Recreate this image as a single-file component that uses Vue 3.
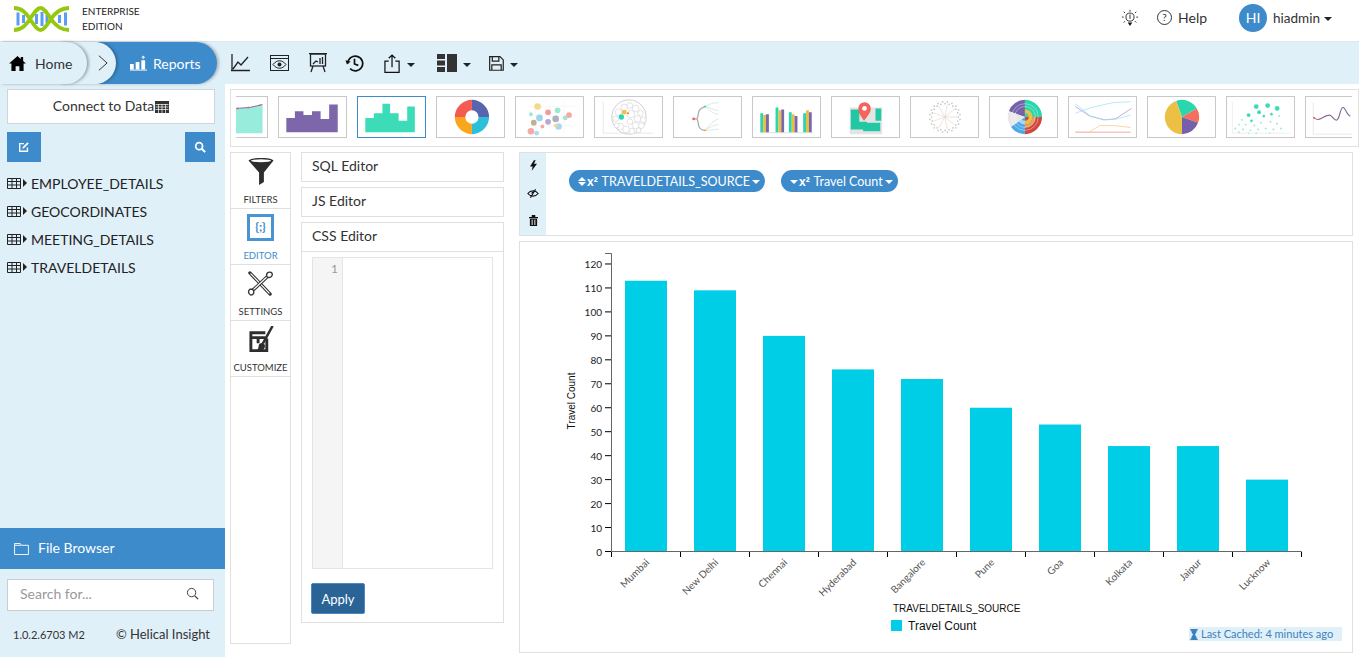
<script setup>
const tables = ['EMPLOYEE_DETAILS', 'GEOCORDINATES', 'MEETING_DETAILS', 'TRAVELDETAILS']

const unit = 2.396
const baseY = 551.5
const bars = [
  ['Mumbai', 113],
  ['New Delhi', 109],
  ['Chennai', 90],
  ['Hyderabad', 76],
  ['Bangalore', 72],
  ['Pune', 60],
  ['Goa', 53],
  ['Kolkata', 44],
  ['Jaipur', 44],
  ['Lucknow', 30],
].map(([name, value], i) => ({
  name,
  x: 625 + i * 69,
  y: baseY - value * unit,
  h: value * unit,
  mid: 650 + i * 69,
}))
const yTicks = Array.from({ length: 13 }, (_, i) => ({ label: i * 10, y: baseY - i * 10 * unit }))
const xTicks = Array.from({ length: 11 }, (_, i) => 611.5 + i * 69)

// wedge between two radii, angles clockwise from top
function wedge(cx, cy, r0, r1, a0, a1) {
  const pt = (r, a) => {
    const t = ((a - 90) * Math.PI) / 180
    return `${(cx + r * Math.cos(t)).toFixed(2)} ${(cy + r * Math.sin(t)).toFixed(2)}`
  }
  const large = a1 - a0 > 180 ? 1 : 0
  return `M${pt(r0, a0)}L${pt(r1, a0)}A${r1} ${r1} 0 ${large} 1 ${pt(r1, a1)}L${pt(r0, a1)}A${r0} ${r0} 0 ${large} 0 ${pt(r0, a0)}z`
}

const donut = [
  [0, 90, '#5864ad'],
  [90, 180, '#2bbfd8'],
  [180, 270, '#faa61a'],
  [270, 360, '#f45b52'],
].map(([a0, a1, fill]) => ({ d: wedge(36, 21, 7, 18, a0, a1), fill }))

const pie = [
  [-20, 60, '#2ad6ae'],
  [60, 110, '#f4705c'],
  [110, 180, '#7560aa'],
  [180, 340, '#ecc044'],
].map(([a0, a1, fill]) => ({ d: wedge(35, 21, 0.01, 18, a0, a1), fill }))

const sunburst = [
  [0, 18, -70, 0, '#7560aa'],
  [0, 18, 0, 90, '#2ad6ae'],
  [0, 18, 90, 180, '#d0483e'],
  [0, 18, 180, 235, '#4ca8e8'],
  [0, 18, 235, 290, '#e8e8e8'],
  [4, 8, 0, 90, '#ecc044'],
  [8, 11, 90, 180, '#e8a060'],
  [4, 8, 90, 180, '#ecc044'],
  [4, 8, 180, 235, '#a8d8f8'],
].map(([r0, r1, a0, a1, fill]) => ({ d: wedge(36, 21, r0 || 0.01, r1, a0, a1), fill }))

const bubbles = [
  [22, 10, 3.5, '#f5d98a'], [33, 16, 3, '#f59a96'], [43, 14, 3, '#9be8d4'], [41, 23, 3.5, '#b0b0c0'],
  [15, 18, 2, '#9be8d4'], [24, 22, 3.5, '#9ad4f0'], [33, 26, 3, '#b0a8d8'], [18, 27, 3, '#c0b090'],
  [15, 36, 3.5, '#f5a8a4'], [21, 38, 2.5, '#a8dcf8'], [27, 31, 2, '#f5a8a4'], [44, 31, 3.5, '#a8d8f8'],
  [51, 22, 2.5, '#9be8d4'], [55, 19, 3, '#f5a8a4'], [41, 30, 2, '#f5d98a'],
]
const packs = [
  [30, 11, 3.5], [36, 9, 3], [42, 12, 3.5], [47, 17, 3], [24, 16, 3.5], [21, 23, 3], [37, 18, 4],
  [44, 23, 3.5], [50, 24, 3], [36, 26, 3], [42, 30, 3.5], [48, 30, 3], [26, 31, 3.5], [32, 34, 3.5],
  [38, 36, 3], [45, 35, 2.5], [22, 30, 2.5],
]
const polar = (r, a) => ({
  x: 35 + Math.cos((a * Math.PI) / 180) * r,
  y: 21 + Math.sin((a * Math.PI) / 180) * r,
})
const spokes = [0, 40, 80, 120, 160, 200, 240, 280, 320].map((a) => polar(13, a))
const rim = Array.from({ length: 40 }, (_, i) => polar(i % 2 ? 16 : 14, i * 9))
const dots = [
  [22, 19, 2], [33, 16, 2], [30, 10, 2.5], [42, 9, 2.5], [52, 12, 2.5], [15, 24, 1], [25, 25, 1.4], [38, 20, 1.4],
  [46, 18, 1.4], [54, 20, 1], [12, 29, 1], [19, 29, 1], [28, 30, 1], [35, 27, 1], [45, 26, 1], [52, 28, 1],
  [8, 33, 1], [16, 34, 1], [24, 35, 1], [32, 34, 1], [40, 33, 1], [48, 34, 1], [56, 33, 1], [12, 37, 1],
  [30, 38, 1], [44, 38, 1], [22, 38, 1],
]
</script>

<template>
  <div class="page">
    <header class="topbar">
      <div class="brand">
        <svg class="logo" viewBox="0 0 58 28" width="58" height="28">
          <g stroke="#5b9df5" stroke-width="3" fill="none">
            <path d="M5 7.500v13M10.500 10v8M23.500 9v10M29 7v14M34 10v8M46.500 10v8M52.500 7.500v13" />
          </g>
          <path d="M1 3C9 3 13 8 17 14C21 20 24 25 27.500 25C31 25 34 20 38 14C42 8 47 3 56 3M1 25C9 25 13 20 17 14C21 8 24 3 27.500 3C31 3 34 8 38 14C42 20 47 25 56 25" fill="none" stroke="#96c80f" stroke-width="3.800" />
        </svg>
        <div class="edition">
          <span>ENTERPRISE</span>
          <span>EDITION</span>
        </div>
      </div>
      <div class="top-actions">
        <svg class="bulb" viewBox="0 0 20 20" width="18" height="18">
          <circle cx="10" cy="9" r="4.500" fill="none" stroke="#222" />
          <path d="M10 6v5M10 1v2M3 3l1.500 1.500M17 3l-1.500 1.500M1 9h2M17 9h2M3 15l1.500-1.500M17 15l-1.500-1.500" stroke="#222" fill="none" />
          <path d="M7.500 15h5L10 19z" fill="#111" />
        </svg>
        <span class="help">
          <span class="help-mark">?</span>
          Help
        </span>
        <span class="avatar">HI</span>
        <span class="user">hiadmin<i class="caret dark"></i></span>
      </div>
    </header>

    <nav class="toolbar">
      <div class="crumbs">
        <div class="crumb home">
          <svg viewBox="0 0 18 16" width="17" height="15">
            <path d="M9 0L0 8h2.500v8h4.500v-5h4v5h4.500V8H18l-3-2.700V1h-2.500v2.100z" fill="#000" />
          </svg>
          Home
        </div>
        <div class="crumb arrow">
          <svg viewBox="0 0 11 18" width="10" height="18">
            <path d="M1 1l9 8-9 8" fill="none" stroke="#222" />
          </svg>
        </div>
        <div class="crumb reports">
          <svg viewBox="0 0 18 16" width="17" height="16">
            <path d="M0 9h4v6H0zM6 7h4v8H6zM12 5h4v10h-4z" fill="#fff" />
            <path d="M0 15.500h18M14 4V1M12.500 2.500L14 .5l1.500 2" stroke="#fff" fill="none" />
          </svg>
          Reports
        </div>
      </div>
      <div class="tools">
        <svg viewBox="0 0 20 18" width="20" height="18">
          <path d="M1 0v16M0 16.500h19M2 15l5-7 3 3 7-8" fill="none" stroke="#222" stroke-width="1.300" />
        </svg>
        <svg viewBox="0 0 20 17" width="20" height="17">
          <rect x=".5" y=".5" width="18" height="15" fill="none" stroke="#222" />
          <path d="M1 3.500h17" stroke="#222" />
          <path d="M3 9.500c4-5 9-5 13 0-4 5-9 5-13 0z" fill="none" stroke="#222" />
          <circle cx="9.500" cy="9.500" r="2" fill="#222" />
        </svg>
        <svg viewBox="0 0 18 20" width="18" height="20">
          <rect x="1.500" y="1" width="15" height="12" fill="none" stroke="#222" stroke-width="1.300" />
          <path d="M0 .7h18M4 13l-2 6M14 13l2 6M4 11l3-3 2 1M11 11V5M13.500 11V4" fill="none" stroke="#222" stroke-width="1.300" />
        </svg>
        <svg class="history" viewBox="0 0 20 20" width="19" height="19">
          <path d="M3 10a7.800 7.800 0 1 1 2.300 5.500M10 5v5.500l4 1.500" fill="none" stroke="#111" stroke-width="1.800" />
          <path d="M.5 6.500l1.500 4.500 4-3z" fill="#111" />
        </svg>
        <span class="tool-drop share">
          <svg viewBox="0 0 18 20" width="17" height="19">
            <path d="M5 7.500H1v12h15v-12h-4M8.500 14V1M5 4.500L8.500 1 12 4.500" fill="none" stroke="#111" stroke-width="1.300" />
          </svg>
          <i class="caret dark"></i>
        </span>
        <span class="tool-drop layout">
          <svg viewBox="0 0 20 18" width="20" height="18">
            <path d="M0 0h8v5H0zM0 6.500h8v5H0zM0 13h8v5H0zM10 0h10v18H10z" fill="#333" />
          </svg>
          <i class="caret dark"></i>
        </span>
        <span class="tool-drop">
          <svg viewBox="0 0 16 16" width="15" height="15">
            <path d="M.7.700h11l3.500 3.500v11H.7z" fill="none" stroke="#222" stroke-width="1.300" />
            <path d="M3.500 1v4.500h7V1M3 15V9.500h10V15" fill="none" stroke="#222" stroke-width="1.300" />
          </svg>
          <i class="caret dark"></i>
        </span>
      </div>
    </nav>

    <div class="body">
      <aside class="sidebar">
        <div class="connect">
          <span class="lift">Connect to Data</span>
          <svg viewBox="0 0 14 12" width="14" height="12">
            <path d="M0 0h14v12H0z" fill="#333" />
            <path d="M.5 3.500h13M.5 6h13M.5 8.500h13M3.500 3v9M7 3v9M10.500 3v9" stroke="#fff" stroke-width=".7" />
          </svg>
        </div>
        <div class="side-buttons">
          <button class="side-btn wide">
            <svg viewBox="0 0 14 14" width="12" height="12">
              <path d="M11 7.500V12H2V3h5" fill="none" stroke="#fff" stroke-width="1.600" />
              <path d="M5.500 7L11 1.500 12.500 3 7 8.500 5 9z" fill="#fff" />
            </svg>
          </button>
          <button class="side-btn">
            <svg viewBox="0 0 14 14" width="12" height="12">
              <circle cx="6" cy="6" r="4" fill="none" stroke="#fff" stroke-width="2" />
              <path d="M9 9l4 4" stroke="#fff" stroke-width="2.400" />
            </svg>
          </button>
        </div>
        <ul class="tables">
          <li v-for="table in tables" :key="table">
            <svg viewBox="0 0 14 11" width="14" height="11">
              <path d="M.5.500h13v10H.5zM.5 3.500h13M.5 7h13M5 .5v10M9.500.5v10" fill="none" stroke="#222" />
            </svg>
            <i class="caret-right"></i>
            {{ table }}
          </li>
        </ul>
        <div class="file-browser">
          <svg viewBox="0 0 16 13" width="15" height="12">
            <path d="M.5.500h6l1.500 2h7.500v10H.5zM.5 2.500h7" fill="none" stroke="#fff" />
          </svg>
          <span class="lift">File Browser</span>
        </div>
        <div class="search">
          <span class="lift">Search for...</span>
          <svg class="lift" viewBox="0 0 14 14" width="13" height="13">
            <circle cx="6" cy="6" r="4.500" fill="none" stroke="#333" />
            <path d="M9.500 9.500L13 13" stroke="#333" stroke-width="1.300" />
          </svg>
        </div>
        <div class="side-foot">
          <span class="version">1.0.2.6703 M2</span>
          <span class="copy">© Helical Insight</span>
        </div>
      </aside>

      <main class="main">
        <div class="thumb-strip">
          <div class="thumbs">
            <div class="thumb">
              <svg viewBox="0 0 69 42">
                <path d="M37 12Q52 12 65 8V38H37z" fill="#98ecdb" />
                <path d="M37 12Q52 12 65 8" fill="none" stroke="#7d66aa" />
                <circle cx="39" cy="12" r="1" fill="#f4645c" /><circle cx="50" cy="11" r="1" fill="#f4645c" /><circle cx="62" cy="8.500" r="1" fill="#f4645c" />
              </svg>
            </div>
            <div class="thumb">
              <svg viewBox="0 0 69 42">
                <path d="M7 22h9v-7h9v4h9v-4h9v8h9V8h9v29H7z" fill="#7d66aa" />
              </svg>
            </div>
            <div class="thumb active">
              <svg viewBox="0 0 69 42">
                <path d="M7 22h9v-5h9V7h8v10h9v8h9V10h8v27H7z" fill="#3ddcb9" />
              </svg>
            </div>
            <div class="thumb">
              <svg viewBox="0 0 69 42">
                <path v-for="(p, i) in donut" :key="i" :d="p.d" :fill="p.fill" />
              </svg>
            </div>
            <div class="thumb">
              <svg viewBox="0 0 69 42">
                <path d="M10 10h50M10 20h50M10 30h50M20 5v33M35 5v33M50 5v33" stroke="#f4f4f4" stroke-width=".7" />
                <circle v-for="(b, i) in bubbles" :key="i" :cx="b[0]" :cy="b[1]" :r="b[2]" :fill="b[3]" />
              </svg>
            </div>
            <div class="thumb">
              <svg viewBox="0 0 69 42">
                <path d="M8 5v33h52" fill="none" stroke="#e8e8e8" />
                <circle cx="35" cy="21" r="18" fill="#fff" stroke="#ccc" />
                <circle v-for="(p, i) in packs" :key="i" :cx="p[0]" :cy="p[1]" :r="p[2]" fill="#fff" stroke="#d4d4d4" stroke-width=".7" />
                <circle cx="30" cy="16" r="2.500" fill="#f0c040" />
                <circle cx="27" cy="21" r="2.800" fill="#2ad6ae" />
                <circle cx="34" cy="17" r="1" fill="#f4645c" />
              </svg>
            </div>
            <div class="thumb">
              <svg viewBox="0 0 69 42">
                <path d="M21 23h2c2 0 1-6 3-9s4-3 6-4M21 23h2c2 0 1 6 3 9s4 3 6 3" fill="none" stroke="#aaa" stroke-width="1.300" />
                <path d="M32 10c5-3 8-4 14-4M32 10c5 1 8 4 14 4M32 10c5 4 8 8 14 8M32 35c5 0 8-1 14-1M32 35c5-3 8-6 14-6M32 35c5-6 8-10 14-12" fill="none" stroke="#d8e8e4" />
                <circle cx="20" cy="23" r="1.500" fill="#f4645c" />
                <circle cx="32" cy="10" r="1" fill="#2ad6ae" /><circle cx="32" cy="35" r="1" fill="#faa61a" />
              </svg>
            </div>
            <div class="thumb">
              <svg viewBox="0 0 69 42">
                <path d="M7 37.500h55" stroke="#ddd" />
                <path d="M7 17h3v20H7zM23 11h3v26h-3zM37 16h3v21h-3zM52 17h3v20h-3z" fill="#2ad6ae" />
                <path d="M10 19h3v18h-3zM26 14h3v23h-3zM40 18h3v19h-3zM55 14h3v23h-3z" fill="#e8c040" />
                <path d="M13 18h3v19h-3zM29 13h3v24h-3zM43 20h3v17h-3zM58 16h3v21h-3z" fill="#7d66aa" />
              </svg>
            </div>
            <div class="thumb">
              <svg viewBox="0 0 69 42">
                <path d="M18 11h34v28H18z" fill="#e4e4e4" />
                <path d="M19 13h9v13h8v8H19zM32 27h18v9H32zM45 12h6v13h-6z" fill="#22c8a4" />
                <path d="M33 25c-4-6-6-8-6-13a6.500 6.500 0 0 1 13 0c0 5-3 7-7 13z" fill="#f4645c" />
                <circle cx="33.500" cy="12" r="2.500" fill="#fff" />
              </svg>
            </div>
            <div class="thumb">
              <svg viewBox="0 0 69 42">
                <line v-for="(s, i) in spokes" :key="i" x1="35" y1="21" :x2="s.x" :y2="s.y" stroke="#e6d4cc" stroke-width=".7" />
                <circle v-for="(r, i) in rim" :key="'r' + i" :cx="r.x" :cy="r.y" r=".9" fill="#c8c8c8" />
              </svg>
            </div>
            <div class="thumb">
              <svg viewBox="0 0 69 42">
                <path v-for="(p, i) in sunburst" :key="i" :d="p.d" :fill="p.fill" />
                <circle cx="36" cy="21" r="11" fill="none" stroke="#fff" stroke-width=".4" />
                <circle cx="36" cy="21" r="14" fill="none" stroke="#fff" stroke-width=".4" />
              </svg>
            </div>
            <div class="thumb">
              <svg viewBox="0 0 69 42">
                <path d="M6 10L21 20l15 4 12-1 17-11" fill="none" stroke="#a898cc" stroke-width=".8" />
                <path d="M6 7L22 20l16 4 12-1 14-4M6 17l17-6 22-5 19-1" fill="none" stroke="#a8e0f4" stroke-width=".8" />
                <path d="M6 37h14l12-7h14l18 2" fill="none" stroke="#f8d090" stroke-width=".9" />
                <path d="M6 37h58" stroke="#f8c4c0" stroke-width="1.400" />
              </svg>
            </div>
            <div class="thumb">
              <svg viewBox="0 0 69 42">
                <path v-for="(p, i) in pie" :key="i" :d="p.d" :fill="p.fill" />
              </svg>
            </div>
            <div class="thumb">
              <svg viewBox="0 0 69 42">
                <circle v-for="(d, i) in dots" :key="i" :cx="d[0]" :cy="d[1]" :r="d[2]" fill="#2ad6ae" :opacity="d[2] > 1 ? 0.9 : 0.5" />
                <path d="M5 5v33h60" fill="none" stroke="#eee" />
              </svg>
            </div>
            <div class="thumb">
              <svg viewBox="0 0 69 42">
                <path d="M7 6v33h60" fill="none" stroke="#e8e8e8" />
                <path d="M7 21c3 4 6 3 9 1s5-3 8-3 5 7 8 5 3-12 6-13 3 8 8 9" fill="none" stroke="#8a6a9a" stroke-width="1.200" />
                <circle cx="8" cy="22" r="1" fill="#f4645c" />
              </svg>
            </div>
          </div>
        </div>

        <div class="workspace">
          <div class="modes">
            <div class="mode">
              <svg viewBox="0 0 26 28" width="26" height="27">
                <path d="M0 2.500C4-1 22-1 26 2.500L16 15v10l-5 3V15z" fill="#2e2e2e" />
                <ellipse cx="13" cy="2.800" rx="10.500" ry="1.500" fill="#fff" />
              </svg>
              <span>FILTERS</span>
            </div>
            <div class="mode current">
              <div class="braces">{;}</div>
              <span>EDITOR</span>
            </div>
            <div class="mode">
              <svg viewBox="0 0 28 28" width="27" height="27">
                <g fill="none" stroke-linecap="round">
                  <path d="M3 3l21 22" stroke="#333" stroke-width="3.400" />
                  <path d="M4 4l19 20" stroke="#fff" stroke-width="1.200" />
                  <path d="M22 6L5 22" stroke="#333" stroke-width="3.400" />
                  <path d="M22 6L5 22" stroke="#fff" stroke-width="1.200" />
                  <path d="M25 2.500c-3-1-6 1-4 5 3 1 6-1 5-4zM3 20c-2 1-2 5 1 6 3 0 4-3 2-6z" stroke="#333" stroke-width="1.400" fill="#fff" />
                </g>
              </svg>
              <span>SETTINGS</span>
            </div>
            <div class="mode">
              <svg viewBox="0 0 26 28" width="26" height="27">
                <path d="M19 13v12.500H2.500V7h15M2.500 12h15M10 12v6" fill="none" stroke="#2e2e2e" stroke-width="3" />
                <path d="M25 0L15 18" stroke="#2e2e2e" stroke-width="2.600" />
                <path d="M11 19c3-3 7-1 6 3s-5 4-8 3c2-2 1-4 2-6z" fill="#2e2e2e" />
              </svg>
              <span>CUSTOMIZE</span>
            </div>
          </div>

          <div class="editors">
            <div class="editor-head box"><span class="lift">SQL Editor</span></div>
            <div class="editor-head box"><span class="lift">JS Editor</span></div>
            <div class="css-editor box">
              <div class="editor-head"><span class="lift">CSS Editor</span></div>
              <div class="css-body">
                <div class="code">
                  <div class="gutter">1</div>
                </div>
                <button class="apply">Apply</button>
              </div>
            </div>
          </div>

          <div class="report">
            <div class="fields box">
              <div class="field-tools">
                <svg viewBox="0 0 8 12" width="7" height="11"><path d="M4.500 0L0 7h3L2 12l6-8H4.500L6.500 0z" fill="#111" /></svg>
                <svg viewBox="0 0 14 12" width="12" height="11">
                  <path d="M1 6c3-4 9-4 12 0-3 4-9 4-12 0z" fill="none" stroke="#111" stroke-width="1.300" />
                  <path d="M4 11l6-10M5.500 6a2 2 0 0 1 3-1.500" stroke="#111" fill="none" stroke-width="1.300" />
                </svg>
                <svg viewBox="0 0 10 12" width="9" height="11">
                  <path d="M0 2h10v1.500H0zM3 0h4v2H3zM1 4h8v8H1z" fill="#111" />
                  <path d="M3.500 5v6M6.500 5v6" stroke="#fff" />
                </svg>
              </div>
              <div class="pills">
                <span class="pill first">
                  <i class="sort"></i><b>x²</b> TRAVELDETAILS_SOURCE<i class="caret"></i>
                </span>
                <span class="pill second">
                  <i class="caret flush"></i><b>x²</b> Travel Count<i class="caret"></i>
                </span>
              </div>
            </div>

            <div class="chart box">
              <svg class="chart-svg" viewBox="520 242 832 410" width="832" height="410">
                <rect v-for="bar in bars" :key="bar.name" :x="bar.x" :y="bar.y" width="42" :height="bar.h" fill="#00cde6" />

                <path d="M605 253.500h6.500V551.500H605M611.500 551.500H1301.500V557" fill="none" stroke="#666" />
                <g v-for="tick in yTicks" :key="tick.label">
                  <line x1="605" x2="611" :y1="tick.y" :y2="tick.y" stroke="#000" />
                  <text class="tick" x="602" :y="tick.y + 4.500" text-anchor="end">{{ tick.label }}</text>
                </g>
                <line v-for="x in xTicks" :key="x" :x1="x" :x2="x" y1="552" y2="557" stroke="#000" />
                <text
                  v-for="bar in bars"
                  :key="bar.name + '-label'"
                  class="cat"
                  :x="bar.mid"
                  y="563"
                  text-anchor="end"
                  :transform="`rotate(-45 ${bar.mid} 563)`"
                >{{ bar.name }}</text>
                <text class="axis-title" x="0" y="0" text-anchor="middle" transform="translate(575 401) rotate(-90)">Travel Count</text>
                <text class="axis-title" x="893" y="612">TRAVELDETAILS_SOURCE</text>
                <rect x="891" y="620" width="11" height="11" fill="#00cde6" />
                <text class="legend" x="908" y="630">Travel Count</text>
              </svg>
              <div class="cached">
                <svg viewBox="0 0 8 12" width="8" height="11">
                  <path d="M0 0h8v1.500H7C7 4 5.500 5 5 6c.5 1 2 2 2 4.500h1V12H0v-1.500h1C1 8 2.500 7 3 6 2.500 5 1 4 1 1.500H0z" fill="#3d80bf" />
                </svg>
                Last Cached: 4 minutes ago
              </div>
            </div>
          </div>
        </div>
      </main>
    </div>
  </div>
</template>

<style scoped>
.page {
  width: 1359px;
  height: 657px;
  overflow: hidden;
  display: flex;
  flex-direction: column;
  font-family: Lato, "Open Sans", sans-serif;
  color: #333;
  background: #fff;
}

.lift {
  margin-bottom: 3px;
}

.topbar {
  height: 41px;
  flex: none;
  display: flex;
  align-items: center;
  justify-content: space-between;
  padding: 0 27px 0 13px;
  box-sizing: border-box;
}

.brand {
  display: flex;
  align-items: center;
  gap: 11px;
}

.logo {
  margin-top: -3px;
}

.edition {
  display: flex;
  flex-direction: column;
  gap: 3px;
  font-size: 10px;
  line-height: 12px;
  color: #222;
  margin-top: -4px;
}

.top-actions {
  display: flex;
  align-items: center;
  font-size: 14px;
  margin-top: -6px;
}

.help {
  display: flex;
  align-items: center;
  gap: 6px;
  margin-left: 18px;
}

.help-mark {
  width: 13px;
  height: 13px;
  line-height: 13px;
  border: 1px solid #333;
  border-radius: 50%;
  text-align: center;
  font-size: 10px;
}

.avatar {
  width: 28px;
  height: 28px;
  line-height: 28px;
  border-radius: 50%;
  background: #3d8bcb;
  color: #fff;
  text-align: center;
  font-size: 14px;
  margin-left: 32px;
  margin-right: 6px;
}

.user {
  display: flex;
  align-items: center;
  gap: 2px;
  font-size: 13.500px;
}

.caret {
  display: inline-block;
  width: 0;
  height: 0;
  border-left: 4px solid transparent;
  border-right: 4px solid transparent;
  border-top: 4px solid #fff;
  margin-left: 2px;
  vertical-align: middle;
}

.caret.dark {
  border-top-color: #222;
  margin-top: 3px;
}

.caret.flush {
  margin-left: 0;
}

.toolbar {
  height: 43px;
  flex: none;
  display: flex;
  align-items: center;
  background: #e0f0f9;
  border-top: 1px solid #dbe9f1;
  box-sizing: border-box;
}

.crumbs {
  display: flex;
  height: 42px;
  width: 218px;
}

.crumb {
  display: flex;
  align-items: center;
  flex: none;
  box-sizing: border-box;
  height: 42px;
  border-radius: 0 21px 21px 0;
  font-size: 14px;
}

.home {
  position: relative;
  z-index: 3;
  width: 87px;
  padding-left: 9px;
  gap: 9px;
  background: #e0f0f9;
  box-shadow: 2px 0 3px rgba(0, 0, 0, 0.3);
}

.arrow {
  position: relative;
  z-index: 2;
  width: 57px;
  margin-left: -28px;
  padding-left: 39px;
  background: #e0f0f9;
  box-shadow: 2px 0 3px rgba(0, 0, 0, 0.25);
}

.reports {
  position: relative;
  z-index: 1;
  width: 119px;
  margin-left: -18px;
  padding-left: 32px;
  gap: 6px;
  background: #3d8bcb;
  color: #fff;
  box-shadow: 2px 0 3px rgba(0, 0, 0, 0.25);
}

.tools {
  display: flex;
  align-items: center;
  gap: 19px;
  margin-left: 13px;
}

.history {
  margin: 0 1px 0 -1px;
}

.tool-drop {
  display: flex;
  align-items: center;
  gap: 4px;
}

.tool-drop.share {
  margin-right: 3px;
}

.tool-drop.layout {
  margin-right: -1px;
}

.body {
  flex: 1;
  display: flex;
  min-height: 0;
}

.sidebar {
  width: 225px;
  flex: none;
  display: flex;
  flex-direction: column;
  background: #e0f0f9;
}

.connect {
  margin: 5px 10px 0 7px;
  height: 35px;
  background: #fff;
  border: 1px solid #ccd6dc;
  box-sizing: border-box;
  display: flex;
  align-items: center;
  justify-content: center;
  font-size: 14px;
  gap: 1px;
}

.side-buttons {
  display: flex;
  justify-content: space-between;
  margin: 8px 10px 0 7px;
}

.side-btn {
  width: 30px;
  height: 30px;
  border: none;
  padding: 0;
  background: #3d8bcb;
  display: flex;
  align-items: center;
  justify-content: center;
}

.side-btn.wide {
  width: 34px;
}

.tables {
  list-style: none;
  margin: 8px 0 0;
  padding: 0 0 0 7px;
  flex: 1;
}

.tables li {
  height: 28px;
  display: flex;
  align-items: center;
  font-size: 14px;
  color: #222;
  padding-bottom: 2px;
  box-sizing: border-box;
}

.caret-right {
  width: 0;
  height: 0;
  border-top: 4px solid transparent;
  border-bottom: 4px solid transparent;
  border-left: 4px solid #222;
  margin: 0 4px 0 2px;
}

.file-browser {
  height: 41px;
  flex: none;
  background: #3d8bcb;
  color: #fff;
  display: flex;
  align-items: center;
  gap: 9px;
  padding-left: 14px;
  font-size: 14px;
}

.search {
  margin: 10px 11px 0 7px;
  height: 32px;
  flex: none;
  box-sizing: border-box;
  background: #fff;
  border: 1px solid #c8ced2;
  display: flex;
  align-items: center;
  justify-content: space-between;
  padding: 0 14px 0 12px;
  font-size: 14px;
  color: #999;
}

.side-foot {
  height: 46px;
  flex: none;
  display: flex;
  align-items: center;
  justify-content: space-between;
  padding: 0 15px 0 13px;
  font-size: 12px;
}

.version {
  font-size: 11px;
}

.copy {
  font-size: 13px;
}

.main {
  flex: 1;
  min-width: 0;
  padding: 5px 0 0 5px;
  display: flex;
  flex-direction: column;
}

.thumb-strip {
  height: 58px;
  flex: none;
  box-sizing: border-box;
  border: 1px solid #e0e0e0;
  padding: 6px 6px 0 5px;
  overflow: hidden;
}

.thumbs {
  display: flex;
  gap: 10px;
  overflow: hidden;
  height: 42px;
}

.thumb {
  width: 69px;
  height: 42px;
  flex: none;
  box-sizing: border-box;
  border: 1px solid #c8c8c8;
  background: #fff;
}

.thumb:first-child {
  margin-left: -37px;
}

.thumb.active {
  border-color: #3d8bcb;
}

.thumb svg {
  display: block;
  width: 100%;
  height: 100%;
  filter: blur(0.3px);
}

.workspace {
  display: flex;
  margin-top: 5px;
  flex: 1;
  min-height: 0;
}

.box {
  border: 1px solid #e0e0e0;
  box-sizing: border-box;
  background: #fff;
}

.modes {
  width: 61px;
  height: 492px;
  flex: none;
  box-sizing: border-box;
  border: 1px solid #e0e0e0;
  margin-right: 10px;
}

.mode {
  height: 56px;
  box-sizing: border-box;
  border-bottom: 1px solid #e0e0e0;
  display: flex;
  flex-direction: column;
  align-items: center;
  padding-top: 5px;
  font-size: 9.500px;
  color: #333;
}

.mode span {
  margin-top: auto;
  margin-bottom: 2px;
  line-height: 12px;
  white-space: nowrap;
}

.mode.current {
  color: #3d8bcb;
}

.braces {
  width: 27px;
  height: 27px;
  box-sizing: border-box;
  border: 3px solid #4b94d3;
  color: #3d8bcb;
  text-align: center;
  font-size: 12px;
  line-height: 20px;
  font-weight: 700;
}

.editors {
  width: 203px;
  flex: none;
  margin-right: 15px;
  display: flex;
  flex-direction: column;
  gap: 5px;
}

.editor-head {
  height: 30px;
  flex: none;
  display: flex;
  align-items: center;
  padding-left: 10px;
  font-size: 14px;
}

.css-editor {
  height: 401px;
  display: flex;
  flex-direction: column;
}

.css-editor .editor-head {
  height: 29px;
  box-sizing: border-box;
  border-bottom: 1px solid #e0e0e0;
}

.css-body {
  padding: 5px 10px 0;
}

.code {
  height: 312px;
  box-sizing: border-box;
  border: 1px solid #e4e4e4;
  display: flex;
}

.gutter {
  width: 30px;
  box-sizing: border-box;
  background: #f5f5f5;
  border-right: 1px solid #e4e4e4;
  text-align: right;
  padding: 3px 4px 0 0;
  font-size: 12px;
  color: #999;
}

.apply {
  display: block;
  margin-top: 14px;
  margin-left: -1px;
  width: 54px;
  height: 31px;
  padding: 0;
  background: #2a6496;
  color: #fff;
  border: 1px solid #4f86c6;
  border-radius: 2px;
  font-family: inherit;
  font-size: 13px;
}

.report {
  width: 834px;
  flex: none;
  display: flex;
  flex-direction: column;
  gap: 5px;
}

.fields {
  height: 84px;
  display: flex;
  flex: none;
}

.field-tools {
  width: 26px;
  background: #e0f0f9;
  display: flex;
  flex-direction: column;
  align-items: center;
  justify-content: space-between;
  padding: 7px 0 9px;
  box-sizing: border-box;
}

.pills {
  display: flex;
  align-items: flex-start;
  gap: 16px;
  padding: 17px 0 0 23px;
}

.pill {
  height: 22px;
  border-radius: 11px;
  background: #3d8bcb;
  color: #fff;
  display: flex;
  align-items: center;
  font-size: 12.500px;
  white-space: pre;
  box-sizing: border-box;
  padding: 1px 7px 0 9px;
}

.pill.first {
  width: 196px;
}

.pill.second {
  width: 117px;
}

.pill b {
  font-family: "Liberation Sans", sans-serif;
  font-size: 12px;
  margin-left: 1px;
  margin-right: 1px;
}

.sort {
  width: 0;
  height: 0;
  border-left: 4px solid transparent;
  border-right: 4px solid transparent;
  border-bottom: 4px solid #fff;
  position: relative;
  margin-bottom: 6px;
}

.sort::after {
  content: "";
  position: absolute;
  left: -4px;
  top: 5px;
  border-left: 4px solid transparent;
  border-right: 4px solid transparent;
  border-top: 4px solid #fff;
}

.chart {
  position: relative;
  height: 412px;
  flex: none;
}

.chart-svg {
  display: block;
}

.tick {
  font-family: Lato, sans-serif;
  font-size: 10px;
  fill: #222;
}

.cat {
  font-family: Lato, sans-serif;
  font-size: 10px;
  fill: #555;
}

.axis-title {
  font-family: "Liberation Sans", sans-serif;
  font-size: 10px;
  fill: #111;
}

.legend {
  font-family: "Liberation Sans", sans-serif;
  font-size: 12px;
  fill: #111;
}

.cached {
  position: absolute;
  right: 10px;
  bottom: 11px;
  width: 153px;
  height: 14px;
  box-sizing: border-box;
  background: #e0f0f9;
  color: #3d80bf;
  font-size: 11px;
  line-height: 14px;
  display: flex;
  align-items: center;
  gap: 3px;
  padding-left: 1px;
  white-space: nowrap;
}
</style>

<style>
html,
body {
  margin: 0;
  overflow: hidden;
}
</style>
